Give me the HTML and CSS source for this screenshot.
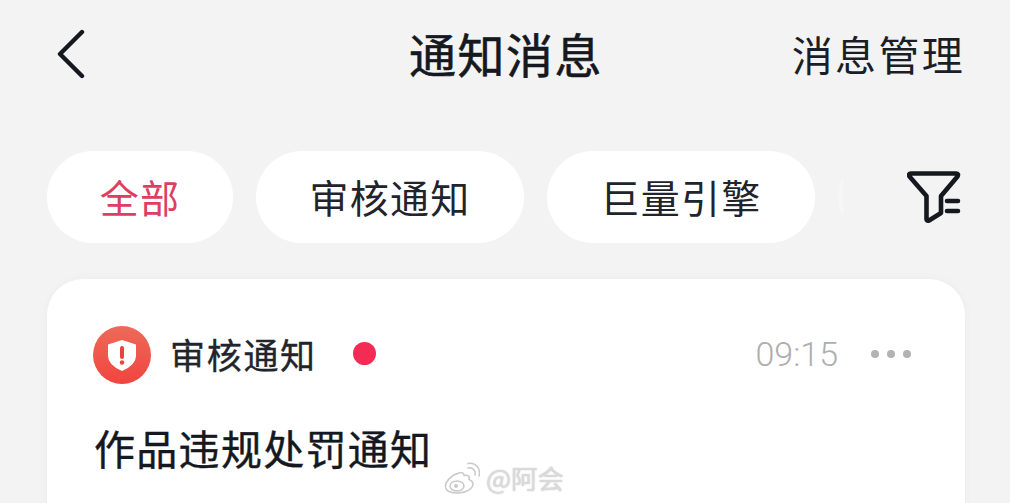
FILE: index.html
```html
<!DOCTYPE html>
<html lang="zh-CN">
<head>
<meta charset="utf-8">
<title>通知消息</title>
<link rel="stylesheet" href="styles.css">
</head>
<body>
<div class="page">
  <header class="nav">
    <svg class="back" viewBox="0 0 30 50" width="30" height="50"><path d="M26 3 L4 25 L26 47" fill="none" stroke="#16181f" stroke-width="4.4" stroke-linecap="round" stroke-linejoin="round"/></svg>
    <h1 class="title">通知消息</h1>
    <span class="manage">消息管理</span>
  </header>
  <div class="tabs-row">
    <div class="tabs">
      <span class="tab tab-first active">全部</span>
      <span class="tab">审核通知</span>
      <span class="tab">巨量引擎</span>
      <span class="tab tab-faded"></span>
    </div>
    <div class="filter">
      <svg viewBox="0 0 54 54" width="54" height="54"><path d="M4 3.500 H49 Q52 3.500 50.500 6.500 L34 26 V43 L22 50.500 Q19.500 51.500 19.500 49 V26 L2.500 6.500 Q1 3.500 4 3.500 Z" fill="none" stroke="#16181f" stroke-width="4.600" stroke-linejoin="round"/><path d="M40 31 H51 M40 41 H51" stroke="#16181f" stroke-width="4.600" stroke-linecap="round"/></svg>
    </div>
  </div>
  <section class="card">
    <div class="card-head">
      <svg class="badge" viewBox="0 0 58 58" width="58" height="58">
        <defs><linearGradient id="badgeFill" x1="0" y1="0" x2="0" y2="1"><stop offset="0" stop-color="#ee6a58"/><stop offset="1" stop-color="#f0443f"/></linearGradient></defs>
        <circle cx="29" cy="29" r="29" fill="url(#badgeFill)"/>
        <path d="M29 14 L43 18.500 V30 Q43 39 29 45 Q15 39 15 30 V18.500 Z" fill="#fff"/>
        <path d="M29 22 V31" stroke="#e8453f" stroke-width="4" stroke-linecap="round"/>
        <circle cx="29" cy="36.500" r="2.200" fill="#e8453f"/>
      </svg>
      <span class="source">审核通知</span>
      <span class="dot"></span>
      <span class="time">09:15</span>
      <span class="more"><i></i><i></i><i></i></span>
    </div>
    <h2 class="card-title">作品违规处罚通知</h2>
  </section>
  <div class="watermark">
    <svg viewBox="0 0 36 32" width="36" height="32"><path d="M15 11 C7 13 1 20 1.500 25 C2 30 9 31.500 15 31 C23 30.500 29 26 29 22 C29 19 26 18 25 17.500 C26 14 24 12.500 20 13.500 C20 11 18 10 15 11 Z" fill="#fff" stroke="#c9c9c9" stroke-width="1.500"/><ellipse cx="13" cy="24" rx="7" ry="5" fill="none" stroke="#c9c9c9" stroke-width="1.500"/><circle cx="12" cy="24" r="2" fill="#c9c9c9"/><path d="M24 6 C29 5 32 9 31 13 M24 1.500 C32 0 37 7 35 14" fill="none" stroke="#c9c9c9" stroke-width="1.500" stroke-linecap="round"/></svg>
    <span>@阿会</span>
  </div>
</div>
</body>
</html>
```

FILE: styles.css
```css
* { box-sizing: border-box; }
html, body { margin: 0; padding: 0; }
body {
  font-family: "Noto Sans CJK SC", "Noto Sans", sans-serif;
  color: #16181f;
  background: #f3f3f3;
}
.page {
  position: relative;
  width: 1010px;
  height: 503px;
  overflow: hidden;
  background: #f3f3f3;
  padding: 0 45px 0 47px;
}
.nav {
  position: relative;
  display: flex;
  align-items: center;
  justify-content: space-between;
  height: 110px;
  padding: 0 0 0 9px;
}
.back { display: block; margin-top: -3px; }
.title {
  position: absolute;
  left: 362px;
  top: 19px;
  margin: 0;
  font-size: 47px;
  font-weight: 400;
  -webkit-text-stroke: 0.6px #16181f;
  letter-spacing: 1.500px;
  line-height: 68px;
  white-space: nowrap;
}
.manage {
  font-size: 41px;
  font-weight: 400;
  letter-spacing: 2.300px;
  line-height: 60px;
  margin-top: -5px;
  color: #1c1e25;
}
.tabs-row {
  position: relative;
  margin-top: 41px;
  height: 92px;
  margin-right: -45px;
}
.tabs {
  display: flex;
  gap: 23px;
  overflow: hidden;
  height: 92px;
}
.tab {
  flex: none;
  width: 268px;
  height: 92px;
  padding-bottom: 3px;
  border-radius: 46px;
  background: #fff;
  display: flex;
  align-items: center;
  justify-content: center;
  font-size: 39px;
  letter-spacing: 1.200px;
  white-space: nowrap;
  color: #22242b;
}
.tab-first { width: 186px; }
.tab.active { color: #dd3f62; }
.tab.tab-faded { background: rgba(255, 255, 255, 0.3); }
.filter {
  position: absolute;
  top: -30px;
  right: 0;
  bottom: 0;
  width: 167px;
  padding: 49px 49px 0 0;
  display: flex;
  justify-content: flex-end;
  align-items: flex-start;
  background: #f3f3f3;
}
.card {
  margin-top: 36px;
  height: 300px;
  border-radius: 36px;
  background: #fff;
  box-shadow: 0 0 10px rgba(0, 0, 0, 0.035);
  padding: 47px 54px 0 46px;
}
.card-head {
  display: flex;
  align-items: center;
  height: 58px;
}
.badge { flex: none; display: block; }
.source {
  margin-left: 19px;
  font-size: 35px;
  font-weight: 400;
  -webkit-text-stroke: 0.35px #22242b;
  letter-spacing: 1.700px;
  color: #22242b;
  line-height: 50px;
  margin-top: -3px;
}
.dot {
  width: 23px;
  height: 23px;
  border-radius: 50%;
  background: #f42b55;
  margin: -3px 0 0 36px;
}
.time {
  margin: -2px 0 0 auto;
  font-family: "Roboto", "Liberation Sans", sans-serif;
  font-weight: 300;
  font-size: 34px;
  color: #aeaeae;
}
.more {
  display: flex;
  gap: 8px;
  margin: -3px 0 0 33px;
}
.more i {
  display: block;
  width: 8px;
  height: 8px;
  border-radius: 50%;
  background: #b3b3b3;
}
.card-title {
  margin: 33px 0 0 1px;
  font-size: 41px;
  font-weight: 400;
  -webkit-text-stroke: 0.4px #16181f;
  letter-spacing: 1.300px;
  line-height: 60px;
  color: #16181f;
  white-space: nowrap;
}
.watermark {
  position: absolute;
  left: 444px;
  top: 461px;
  display: flex;
  align-items: center;
  gap: 6px;
  color: #dadada;
  font-size: 26.500px;
  line-height: 34px;
  text-shadow: 0 0 1.500px #c4c4c4;
}
```
